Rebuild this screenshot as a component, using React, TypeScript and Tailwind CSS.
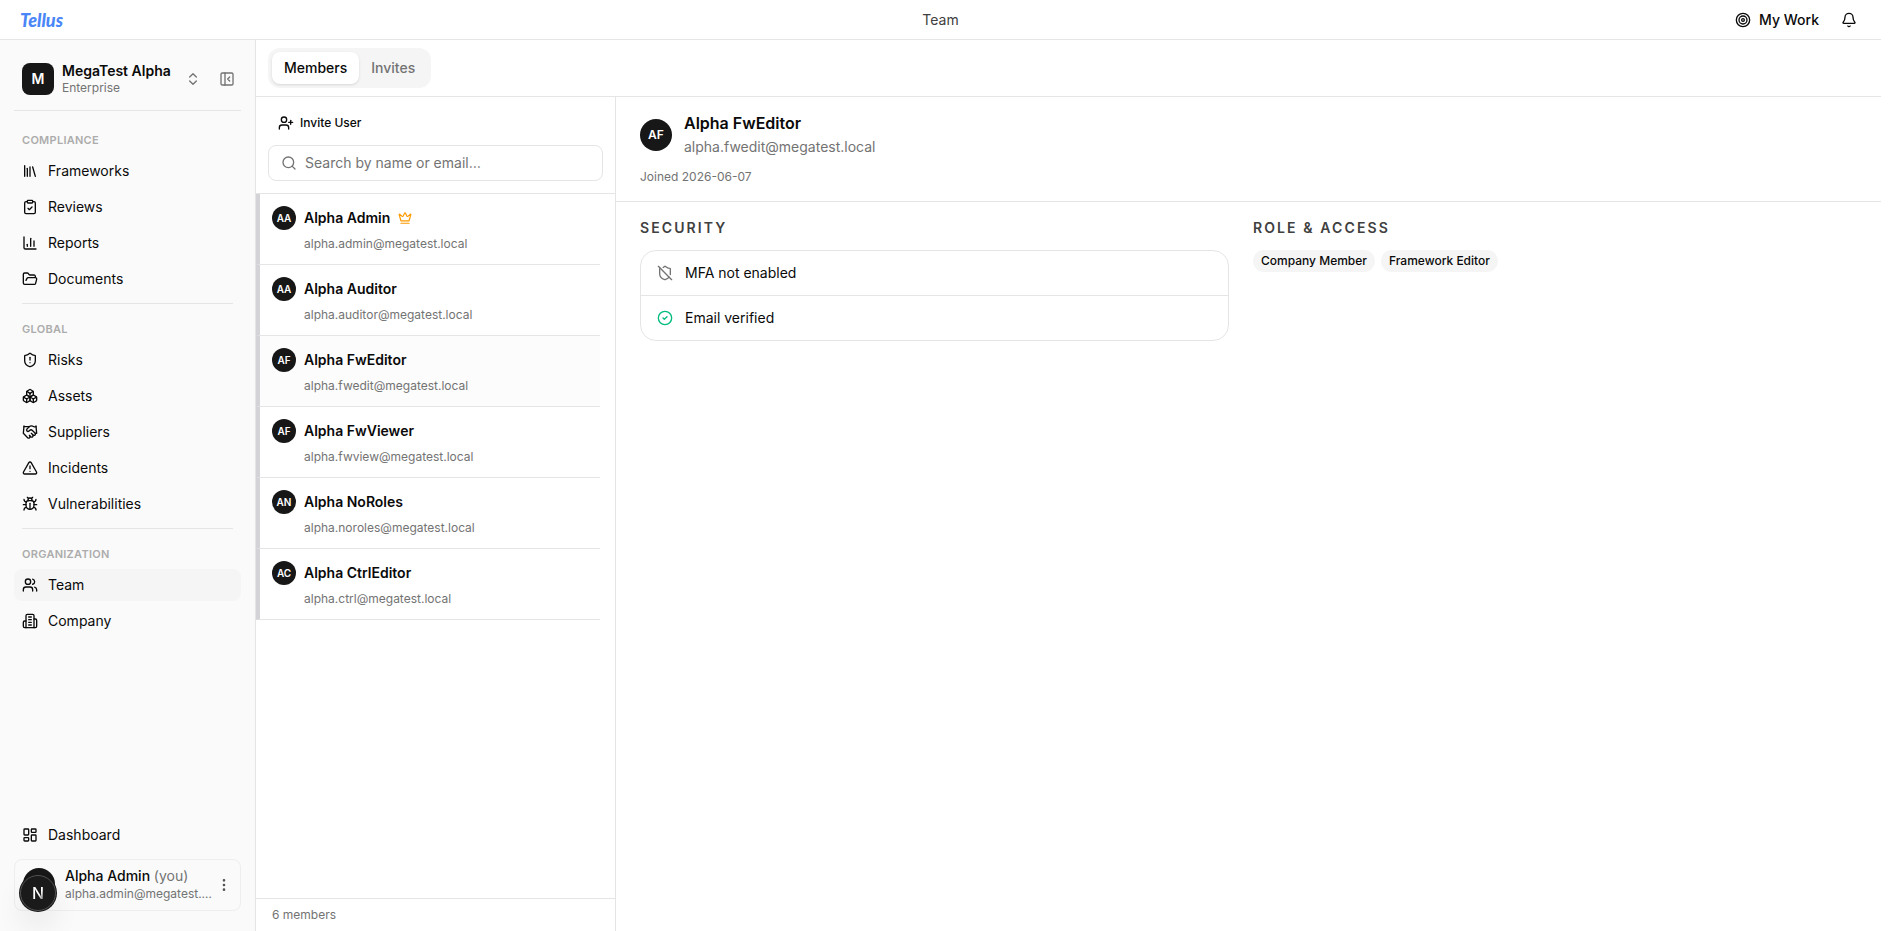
import React from 'react';
import {
  BarChart3, Bell, Boxes, Bug, ChevronsUpDown, CircleCheck, ClipboardCheck, Crown,
  EllipsisVertical, FolderOpen, Handshake, LayoutDashboard, Library, PanelLeftClose, Search,
  ShieldAlert, ShieldOff, Target, TriangleAlert, UserPlus, Users,
} from 'lucide-react';

type NavItem = { label: string; icon: React.ComponentType<{ size?: number }>; active?: boolean };

function OfficeBuilding({ size = 16 }: { size?: number }) {
  return (
    <svg
      width={size}
      height={size}
      viewBox="0 0 24 24"
      fill="none"
      stroke="currentColor"
      strokeWidth="2"
      strokeLinecap="round"
      strokeLinejoin="round"
      aria-hidden="true"
    >
      <path d="M6 22V4a2 2 0 0 1 2-2h8a2 2 0 0 1 2 2v18Z" />
      <path d="M6 12H4a2 2 0 0 0-2 2v6a2 2 0 0 0 2 2h2" />
      <path d="M18 9h2a2 2 0 0 1 2 2v9a2 2 0 0 1-2 2h-2" />
      <path d="M10 6h4M10 10h4M10 14h4M10 18h4" />
    </svg>
  );
}

const sections: { title: string; items: NavItem[] }[] = [
  {
    title: 'Compliance',
    items: [
      { label: 'Frameworks', icon: Library },
      { label: 'Reviews', icon: ClipboardCheck },
      { label: 'Reports', icon: BarChart3 },
      { label: 'Documents', icon: FolderOpen },
    ],
  },
  {
    title: 'Global',
    items: [
      { label: 'Risks', icon: ShieldAlert },
      { label: 'Assets', icon: Boxes },
      { label: 'Suppliers', icon: Handshake },
      { label: 'Incidents', icon: TriangleAlert },
      { label: 'Vulnerabilities', icon: Bug },
    ],
  },
  {
    title: 'Organization',
    items: [
      { label: 'Team', icon: Users, active: true },
      { label: 'Company', icon: OfficeBuilding },
    ],
  },
];

const members = [
  { initials: 'AA', name: 'Alpha Admin', email: 'alpha.admin@megatest.local', owner: true },
  { initials: 'AA', name: 'Alpha Auditor', email: 'alpha.auditor@megatest.local' },
  { initials: 'AF', name: 'Alpha FwEditor', email: 'alpha.fwedit@megatest.local', selected: true },
  { initials: 'AF', name: 'Alpha FwViewer', email: 'alpha.fwview@megatest.local' },
  { initials: 'AN', name: 'Alpha NoRoles', email: 'alpha.noroles@megatest.local' },
  { initials: 'AC', name: 'Alpha CtrlEditor', email: 'alpha.ctrl@megatest.local' },
];

function NavLink({ label, icon: Icon, active }: NavItem) {
  return (
    <a
      href="#"
      aria-current={active ? 'page' : undefined}
      className={`flex h-8 items-center gap-2.5 rounded-lg px-2 text-sm ${active ? 'bg-neutral-100' : ''}`}
    >
      <Icon size={16} />
      {label}
    </a>
  );
}

function Header() {
  return (
    <header className="grid h-10 shrink-0 grid-cols-3 items-center border-b border-neutral-200 px-5">
      <a href="#" className="justify-self-start font-['Lato',sans-serif] text-lg leading-6 font-black text-[#4a86f7] italic">
        Tellus
      </a>
      <h1 className="justify-self-center text-sm text-neutral-700">Team</h1>
      <div className="flex items-center gap-2.5 justify-self-end">
        <a href="#" className="flex items-center gap-2 px-2 text-sm font-medium">
          <Target size={16} />
          My Work
        </a>
        <button type="button" aria-label="Notifications" className="px-1">
          <Bell size={16} />
        </button>
      </div>
    </header>
  );
}

function Sidebar() {
  return (
    <aside className="relative flex w-64 shrink-0 flex-col border-r border-neutral-200 bg-neutral-50 px-3.5 pb-5">
      <div className="flex h-[71px] shrink-0 items-center border-b border-neutral-200 pt-2 pr-1.5 pl-2">
        <button type="button" className="flex flex-1 items-center text-left">
          <span className="mr-2 flex size-8 items-center justify-center rounded-lg bg-neutral-900 text-sm font-semibold text-white">M</span>
          <span className="flex-1">
            <span className="block text-sm leading-[18px] font-semibold">MegaTest Alpha</span>
            <span className="block text-xs leading-4 text-neutral-500">Enterprise</span>
          </span>
          <ChevronsUpDown size={16} className="text-neutral-500" />
        </button>
        <button type="button" aria-label="Collapse sidebar" className="ml-[18px] text-neutral-500">
          <PanelLeftClose size={16} />
        </button>
      </div>
      <nav className="flex flex-1 flex-col pt-4">
        {sections.map((section, i) => (
          <React.Fragment key={section.title}>
            {i > 0 && <hr className="mx-2 mt-2 mb-3 border-neutral-200" />}
            <h2 className="flex h-7 items-center px-2 pb-0.5 text-[11px] font-semibold tracking-wide text-[#acacac] uppercase">
              {section.title}
            </h2>
            <div className="flex flex-col gap-1">
              {section.items.map((item) => <NavLink key={item.label} {...item} />)}
            </div>
          </React.Fragment>
        ))}
        <div className="mt-auto mb-2">
          <NavLink label="Dashboard" icon={LayoutDashboard} />
        </div>
      </nav>
      <button type="button" className="flex h-[52px] items-center rounded-lg border border-[#eeeeee] px-2 text-left">
        <span className="mt-2 size-8 shrink-0 self-start rounded-full bg-neutral-900" />
        <span className="ml-2.5 min-w-0 flex-1">
          <span className="block text-sm leading-[18px] font-medium">
            Alpha Admin <span className="font-normal text-neutral-500">(you)</span>
          </span>
          <span className="block truncate text-xs leading-[18px] text-neutral-500">alpha.admin@megatest.local</span>
        </span>
        <EllipsisVertical size={16} className="ml-1 shrink-0 text-neutral-600" />
      </button>
      <button
        type="button"
        aria-label="Open developer tools"
        className="absolute bottom-5 left-5 flex size-9 items-center justify-center rounded-full border border-neutral-600 bg-[#1a1a1a] shadow-[0_16px_32px_-8px_rgba(0,0,0,0.24)] ring-1 ring-neutral-900"
      >
        <span className="bg-gradient-to-br from-white from-60% to-neutral-700 bg-clip-text text-base leading-5 font-medium text-transparent">N</span>
      </button>
    </aside>
  );
}

function MemberList() {
  return (
    <section aria-label="Members" className="flex w-[360px] shrink-0 flex-col border-r border-neutral-200">
      <div className="border-b border-neutral-200 p-3">
        <button type="button" className="flex h-7 items-center gap-1.5 px-2.5 text-xs font-medium">
          <UserPlus size={16} />
          Invite User
        </button>
        <label className="mt-2 flex h-9 items-center gap-2 rounded-lg border border-neutral-200 px-3 text-neutral-500">
          <Search size={16} />
          <input
            type="search"
            aria-label="Search by name or email"
            placeholder="Search by name or email…"
            className="min-w-0 flex-1 bg-transparent text-sm outline-none placeholder:text-neutral-500"
          />
        </label>
      </div>
      <ul className="flex-1 pr-[15px]">
        {members.map((m) => (
          <li key={m.name}>
            <button
              type="button"
              className={`flex h-[71px] w-full gap-2 border-b border-l-4 border-b-neutral-200 border-l-zinc-300 px-3 pt-3 text-left ${m.selected ? 'bg-[#fcfcfc]' : ''}`}
            >
              <span className="flex size-6 items-center justify-center rounded-full bg-neutral-900 text-[10px] font-semibold text-white">
                {m.initials}
              </span>
              <span className="flex flex-col gap-1">
                <span className="flex h-6 items-center gap-2 text-sm font-semibold">
                  {m.name}
                  {m.owner && <Crown size={14} className="text-amber-500" />}
                </span>
                <span className="text-xs leading-5 text-neutral-500">{m.email}</span>
              </span>
            </button>
          </li>
        ))}
      </ul>
      <footer className="flex h-[33px] items-center border-t border-neutral-200 px-4 text-xs text-neutral-500">6 members</footer>
    </section>
  );
}

function MemberDetail() {
  return (
    <article className="min-w-0 flex-1">
      <div className="border-b border-neutral-200 px-6 pt-3.5 pb-4">
        <div className="flex items-center gap-3">
          <span className="flex size-8 items-center justify-center rounded-full bg-neutral-900 text-xs font-semibold text-white">AF</span>
          <div>
            <h2 className="text-base leading-6 font-semibold">Alpha FwEditor</h2>
            <p className="text-sm leading-6 text-neutral-500">alpha.fwedit@megatest.local</p>
          </div>
        </div>
        <p className="mt-2.5 text-xs leading-4 text-neutral-500">Joined 2026-06-07</p>
      </div>
      <div className="grid grid-cols-2 gap-6 py-4 pr-[39px] pl-6">
        <section>
          <h3 className="text-sm leading-5 font-semibold tracking-[0.15em] text-neutral-700 uppercase">Security</h3>
          <ul className="mt-3 divide-y divide-neutral-200 rounded-2xl border border-neutral-200 text-sm">
            <li className="flex items-center gap-3 px-4 py-3">
              <ShieldOff size={16} className="text-neutral-500" />
              MFA not enabled
            </li>
            <li className="flex items-center gap-3 px-4 py-3">
              <CircleCheck size={16} className="text-emerald-500" />
              Email verified
            </li>
          </ul>
        </section>
        <section>
          <h3 className="text-sm leading-5 font-semibold tracking-[0.15em] text-neutral-700 uppercase">Role &amp; Access</h3>
          <div className="mt-3 flex gap-1.5 text-xs font-medium">
            <span className="rounded-full bg-neutral-100 px-2 py-[3px]">Company Member</span>
            <span className="rounded-full bg-neutral-100 px-2 py-[3px]">Framework Editor</span>
          </div>
        </section>
      </div>
    </article>
  );
}

export default function App() {
  return (
    <div className="flex min-h-screen flex-col bg-white pr-[15px] font-['Inter',sans-serif] text-neutral-950">
      <Header />
      <div className="flex flex-1">
        <Sidebar />
        <main className="flex min-w-0 flex-1 flex-col">
          <div className="border-b border-neutral-200 px-3 py-2">
            <div role="tablist" className="inline-flex rounded-xl bg-neutral-100 p-1 align-top text-sm font-medium">
              <button type="button" role="tab" aria-selected="true" className="h-8 rounded-lg bg-white px-3 shadow-sm">Members</button>
              <button type="button" role="tab" aria-selected="false" className="h-8 rounded-lg px-3 text-neutral-500">Invites</button>
            </div>
          </div>
          <div className="flex flex-1">
            <MemberList />
            <MemberDetail />
          </div>
        </main>
      </div>
    </div>
  );
}
